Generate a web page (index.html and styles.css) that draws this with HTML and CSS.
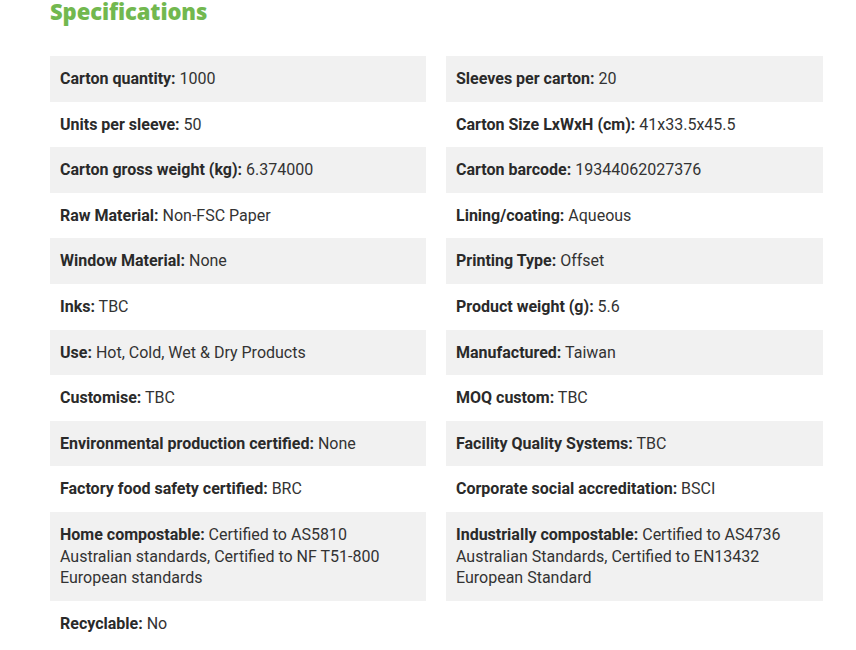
FILE: index.html
```html
<!DOCTYPE html>
<html>
<head>
<meta charset="utf-8">
<link rel="stylesheet" href="styles.css">
</head>
<body>
<div class="wrap">
  <h2 class="title">Specifications</h2>
  <div class="specs">
    <div class="row"><b>Carton quantity:</b> 1000</div>
    <div class="row"><b>Sleeves per carton:</b> 20</div>
    <div class="row"><b>Units per sleeve:</b> 50</div>
    <div class="row"><b>Carton Size LxWxH (cm):</b> 41x33.5x45.5</div>
    <div class="row"><b>Carton gross weight (kg):</b> 6.374000</div>
    <div class="row"><b>Carton barcode:</b> 19344062027376</div>
    <div class="row"><b>Raw Material:</b> Non-FSC Paper</div>
    <div class="row"><b>Lining/coating:</b> Aqueous</div>
    <div class="row"><b>Window Material:</b> None</div>
    <div class="row"><b>Printing Type:</b> Offset</div>
    <div class="row"><b>Inks:</b> TBC</div>
    <div class="row"><b>Product weight (g):</b> 5.6</div>
    <div class="row"><b>Use:</b> Hot, Cold, Wet &amp; Dry Products</div>
    <div class="row"><b>Manufactured:</b> Taiwan</div>
    <div class="row"><b>Customise:</b> TBC</div>
    <div class="row"><b>MOQ custom:</b> TBC</div>
    <div class="row"><b>Environmental production certified:</b> None</div>
    <div class="row"><b>Facility Quality Systems:</b> TBC</div>
    <div class="row"><b>Factory food safety certified:</b> BRC</div>
    <div class="row"><b>Corporate social accreditation:</b> BSCI</div>
    <div class="row"><b>Home compostable:</b> Certified to AS5810 Australian standards, Certified to NF T51-800 European standards</div>
    <div class="row"><b>Industrially compostable:</b> Certified to AS4736 Australian Standards, Certified to EN13432 European Standard</div>
    <div class="row"><b>Recyclable:</b> No</div>
  </div>
</div>
</body>
</html>
```
FILE: styles.css
```css
html, body {
  margin: 0;
  padding: 0;
  background: #ffffff;
}
.wrap {
  width: 773px;
  padding-left: 50px;
}
.title {
  margin: 0;
  height: 56px;
  font-family: "Open Sans", sans-serif;
  font-weight: 800;
  font-size: 22px;
  line-height: 23px;
  color: #72b84f;
  letter-spacing: -0.1px;
}
.specs {
  display: grid;
  grid-template-columns: 376px 377px;
  column-gap: 20px;
  font-family: Roboto, "Liberation Sans", sans-serif;
  font-size: 16px;
  line-height: 21.6px;
  color: #333333;
}
.row {
  padding: 12px 10px;
}
.row b {
  font-weight: 700;
  color: #2a2a2a;
}
.row:nth-child(4n+1),
.row:nth-child(4n+2) {
  background: #f1f1f1;
}
```
